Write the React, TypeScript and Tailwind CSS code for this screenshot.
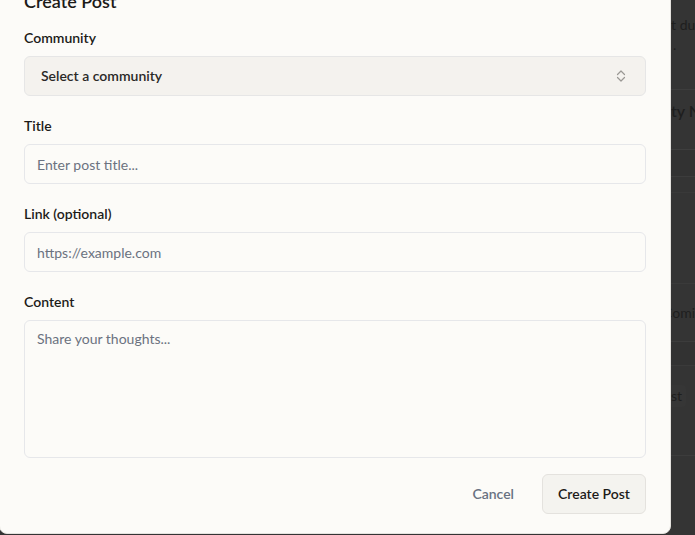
import React from 'react';

const font = { fontFamily: 'Lato, "Noto Sans", sans-serif' };

const Field = ({ label, children }: { label: string; children: React.ReactNode }) => (
  <div className="flex flex-col">
    <label className="mb-2 text-sm font-semibold leading-5 text-[#1c1b19]">{label}</label>
    {children}
  </div>
);

const SortIcon = () => (
  <svg width="10" height="14" viewBox="0 0 10 14" fill="none" className="mr-[3px] text-[#9a9894]">
    <path d="M1.5 5.5 5 2l3.5 3.5M1.5 8.5 5 12l3.5-3.5" stroke="currentColor" strokeWidth="1.2" strokeLinecap="round" strokeLinejoin="round" />
  </svg>
);

// the page behind the dialog, only a sliver shows at the right edge
const BackdropStrip = () => (
  <div className="flex-1 overflow-hidden bg-[#343434] text-[#1e1e1e]">
    <div className="flex h-[90px] flex-col border-b border-[#3d3d3d] pt-[15px] text-sm">
      <span className="-ml-[6px] whitespace-nowrap leading-5">st during</span>
      <span className="ml-[2px] leading-5">.</span>
    </div>
    <div className="flex h-[60px] items-start border-b border-[#3e3e3e] pt-[9px]">
      <span className="-ml-[4px] whitespace-nowrap text-base font-semibold">ity Name</span>
    </div>
    <div className="h-[27px] border-b border-[#3c3c3c] bg-[#323232]" />
    <div className="h-[16px] border-b border-[#393939]" />
    <div className="h-[91px] border-b border-[#3a3a3a]" />
    <div className="flex h-[58px] items-center border-b border-[#3c3c3c]">
      <span className="-ml-[8px] whitespace-nowrap text-sm">Comic</span>
    </div>
    <div className="h-[24px] border-b border-[#3a3a3a] bg-[#323232]" />
    <div className="flex h-[90px] items-start border-b border-[#3c3c3c] pt-[19px]">
      <span className="-ml-[20px] flex h-[22px] items-center whitespace-nowrap rounded bg-[#363636] px-1 text-sm">Post</span>
    </div>
    <div className="h-[80px]" />
  </div>
);

export default function App() {
  return (
    <div className="flex h-[535px] w-[695px] items-start overflow-hidden bg-[#343434]" style={font}>
      <div className="-ml-px -mt-[38px] flex w-[672px] shrink-0 flex-col rounded-lg border border-[#e4e2de] bg-[#fcfbf8] px-6 pb-[19px] pt-6">
        <h2 className="mb-[13px] text-lg font-semibold leading-7 text-[#1c1b19]">Create Post</h2>

        <div className="flex flex-col gap-5">
          <Field label="Community">
            <button className="flex h-10 items-center justify-between rounded-md border border-[#e6e6e6] bg-[#f4f2ee] px-4 text-sm font-semibold text-[#2a2927]">
              <span>Select a community</span>
              <SortIcon />
            </button>
          </Field>

          <Field label="Title">
            <input
              placeholder="Enter post title..."
              className="h-10 rounded-md border border-[#e6e7ea] bg-transparent px-3 text-sm text-[#1c1b19] outline-none placeholder:text-[#6b7280]"
            />
          </Field>

          <Field label="Link (optional)">
            <input
              placeholder="https://example.com"
              className="h-10 rounded-md border border-[#e6e7ea] bg-transparent px-3 text-sm text-[#1c1b19] outline-none placeholder:text-[#6b7280]"
            />
          </Field>

          <Field label="Content">
            <textarea
              placeholder="Share your thoughts..."
              className="h-[138px] resize-none rounded-md border border-[#e6e7ea] bg-transparent px-3 py-2 text-sm leading-5 text-[#1c1b19] outline-none placeholder:text-[#6b7280]"
            />
          </Field>
        </div>

        <div className="mt-4 flex justify-end gap-3">
          <button className="h-10 rounded-md px-4 text-sm font-semibold text-[#687181]">Cancel</button>
          <button className="h-10 rounded-md border border-[#e4e2de] bg-[#f4f3ef] px-[15px] text-sm font-semibold text-[#1c1b19]">
            Create Post
          </button>
        </div>
      </div>
      <BackdropStrip />
    </div>
  );
}
